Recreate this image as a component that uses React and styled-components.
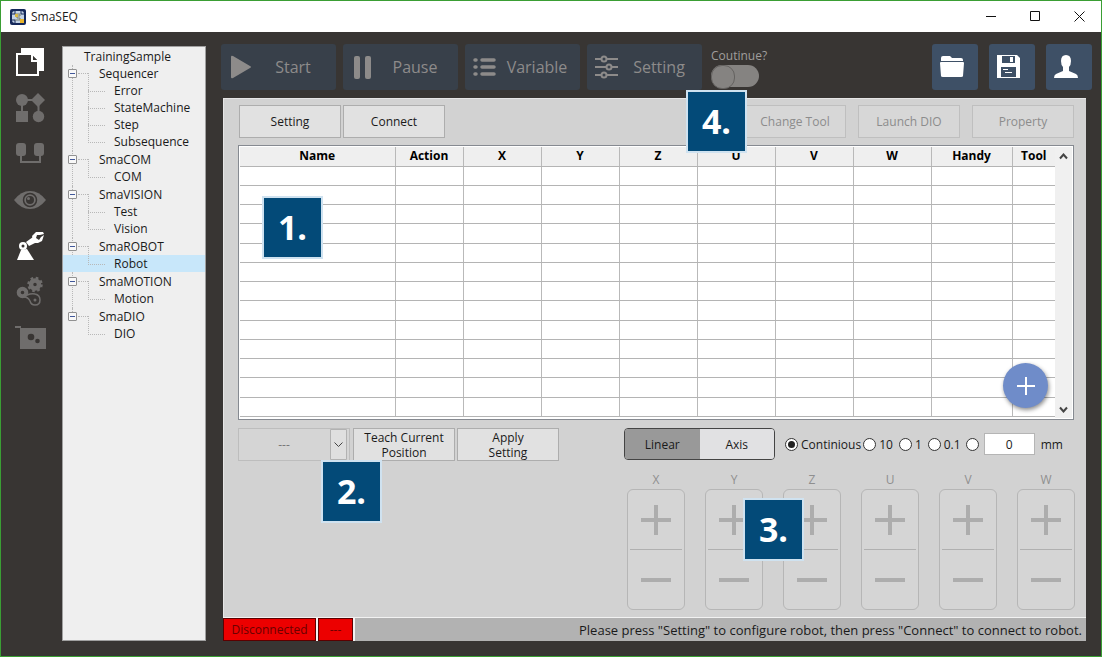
import React, { useState } from "react";
import styled, { createGlobalStyle } from "styled-components";

const Global = createGlobalStyle`
  * { box-sizing: border-box; }
  body { margin: 0; }
  body, button, input, select { font-family: "Open Sans", "Noto Sans", sans-serif; font-size: 12px; color: #1a1a1a; }
  button { padding: 0; cursor: pointer; }
  button:disabled, select:disabled { cursor: default; }
  ul { list-style: none; margin: 0; padding: 0; }
`;

const Window = styled.div`
  position: relative;
  display: flex;
  flex-direction: column;
  min-height: 100vh;
  min-width: 1040px;
  border: 1px solid #3a9e34;
  background: #383533;
`;

const TitleBar = styled.header`
  display: flex;
  align-items: center;
  height: 31px;
  padding-left: 9px;
  background: #fff;
`;

const Title = styled.h1`
  flex: 1;
  margin: 0 0 0 5px;
  font-size: 12px;
  font-weight: 400;
`;

const CaptionButton = styled.button`
  display: grid;
  place-items: center;
  width: 44px;
  height: 30px;
  border: 0;
  background: none;
`;

const Body = styled.div`
  display: flex;
  flex: 1;
  padding: 12px 9px 15px 0;
`;

const Rail = styled.nav`
  display: flex;
  flex-direction: column;
  align-items: center;
  gap: 14px;
  width: 61px;
  padding: 2px 4px 0 0;
`;

const RailButton = styled.button`
  width: 32px;
  height: 32px;
  border: 0;
  background: none;
  color: ${(p) => (p.$active ? "#fff" : "#6f6d6c")};
  svg { display: block; }
`;

const Tree = styled.aside`
  width: 144px;
  margin: 2px 15px 0 0;
  padding: 1px 0;
  border: 1px solid #a0a0a0;
  background: #efefef;
`;

const TreeRoot = styled.div`
  height: 17px;
  padding-left: 21px;
  line-height: 17px;
`;

const Group = styled.li`
  position: relative;
  padding-bottom: 1px;
  &::before {
    content: "";
    position: absolute;
    left: 9px;
    top: 0;
    height: ${(p) => (p.$last ? "8px" : "100%")};
    border-left: 1px dotted #b8b8b8;
  }
`;

const GroupRow = styled.div`
  display: flex;
  align-items: center;
  height: 17px;
  padding-left: 5px;
`;

const Toggle = styled.button`
  position: relative;
  display: grid;
  place-items: center;
  width: 9px;
  height: 9px;
  border: 1px solid #919191;
  border-radius: 1px;
  background: #f8f8f8;
  &::before { content: ""; width: 5px; height: 1px; background: #41589a; }
`;

const Stub = styled.span`
  width: 10px;
  margin: 0 11px 0 1px;
  border-top: 1px dotted #b8b8b8;
`;

const Leaf = styled.li`
  position: relative;
  height: 17px;
  padding-left: 51px;
  line-height: 18px;
  background: ${(p) => (p.$selected ? "#c8e7fa" : "none")};
  &::before {
    content: "";
    position: absolute;
    left: 25px;
    top: -9px;
    width: 16px;
    height: 18px;
    border-left: 1px dotted #b8b8b8;
    border-bottom: 1px dotted #b8b8b8;
  }
`;

const Main = styled.main`
  display: flex;
  flex: 1;
  flex-direction: column;
  min-width: 0;
`;

const Toolbar = styled.div`
  display: flex;
  gap: 7px;
  height: 46px;
  margin-bottom: 8px;
`;

const ToolButton = styled.button`
  display: flex;
  align-items: center;
  width: 115px;
  border: 0;
  border-radius: 3px;
  background: #38404a;
  color: #8d8b8a;
  font-size: 16px;
  svg { flex: none; margin-left: 8px; }
  span { flex: 1; padding-right: 3px; color: #8d8b8a; }
`;

const ContinueSwitch = styled.label`
  display: flex;
  flex: 1;
  flex-direction: column;
  align-items: flex-start;
  gap: 1px;
  padding: 3px 0 0 2px;
  color: #a09e9d;
  line-height: 17px;
`;

const SwitchInput = styled.input`
  appearance: none;
  display: flex;
  width: 48px;
  height: 22px;
  margin: 0;
  border-radius: 11px;
  background: #858381;
  &::before {
    content: "";
    width: 22px;
    height: 22px;
    border: 1px solid #646260;
    border-radius: 11px;
    background: #858381;
  }
`;

const ActionGroup = styled.div`
  display: flex;
  gap: 11px;
`;

const SquareButton = styled.button`
  display: grid;
  place-items: center;
  width: 46px;
  border: 0;
  border-radius: 3px;
  background: #3e5066;
  color: #fff;
  padding-right: 6px;
`;

const Panel = styled.section`
  display: flex;
  flex: 1;
  flex-direction: column;
  margin: 0 6px 0 2px;
  border-top: 1px solid #e6e6e6;
  border-left: 1px solid #e6e6e6;
  background: #d2d2d2;
`;

const PanelBody = styled.div`
  display: flex;
  flex: 1;
  flex-direction: column;
  padding: 6px 12px 7px 14px;
`;

const ButtonRow = styled.div`
  display: flex;
  gap: 2px;
  margin: 0 0 7px 1px;
`;

const RightButtons = styled.div`
  display: flex;
  gap: 12px;
  margin-left: auto;
`;

const PanelButton = styled.button`
  width: 102px;
  height: 33px;
  border: 1px solid #adadad;
  background: #e1e1e1;
  line-height: 15px;
  &:disabled { border-color: #bfbfbf; background: #d7d7d7; color: #8c8c8c; }
`;

const GridFrame = styled.div`
  position: relative;
  display: flex;
  height: 275px;
  padding: 1px;
  overflow: hidden;
  border: 1px solid #868a91;
  background: #fff;
`;

const Table = styled.table`
  flex: 1;
  height: 270px;
  table-layout: fixed;
  border-collapse: collapse;
  th, td { padding: 0; border-right: 1px solid #b9b9b9; border-bottom: 1px solid #b4b4b4; }
  th:last-child, td:last-child { border-right: 0; }
  th { height: 19px; background: #efefef; color: #000; font-weight: 700; line-height: 16px; }
`;

const TableWrap = styled.div`
  display: flex;
  flex: 1;
  align-items: flex-start;
`;

const ScrollBar = styled.div`
  display: flex;
  flex-direction: column;
  justify-content: space-between;
  width: 17px;
  background: #f0f0f0;
`;

const ScrollButton = styled.button`
  display: grid;
  place-items: center;
  height: 18px;
  border: 0;
  background: none;
`;

const AddButton = styled.button`
  position: absolute;
  right: 25px;
  bottom: 11px;
  display: grid;
  place-items: center;
  width: 45px;
  height: 45px;
  border: 0;
  border-radius: 50%;
  background: #6f8cc9;
  box-shadow: 1px 2px 4px rgba(0, 0, 0, 0.45);
`;

const ControlRow = styled.div`
  display: flex;
  align-items: flex-start;
  justify-content: space-between;
  margin: 8px 0 10px;
`;

const LeftControls = styled.div`
  display: flex;
  gap: 2px;
`;

const SelectBox = styled.div`
  display: grid;
  width: 112px;
  margin-right: 1px;
  select, svg { grid-area: 1 / 1; }
  svg { justify-self: end; align-self: center; margin-right: 2px; pointer-events: none; }
`;

const Select = styled.select`
  appearance: none;
  height: 33px;
  padding: 0 20px 0 0;
  border: 1px solid #bdbdbd;
  border-radius: 0;
  background: #d5d5d5;
  color: #777;
  text-align: center;
  text-align-last: center;
  opacity: 1;
`;

const MoveControls = styled.div`
  display: flex;
  width: 450px;
  align-items: center;
`;

const Segmented = styled.div`
  display: flex;
  width: 151px;
  height: 32px;
  margin-right: 10px;
  overflow: hidden;
  border: 1px solid #444;
  border-radius: 4px;
`;

const Segment = styled.button`
  flex: 1;
  border: 0;
  background: ${(p) => (p.$on ? "#999" : "#e1e1e3")};
`;

const Steps = styled.fieldset`
  display: flex;
  align-items: center;
  height: 24px;
  margin: 0;
  padding: 0;
  border: 0;
`;

const Step = styled.label`
  display: flex;
  align-items: center;
  gap: 3px;
  margin-right: ${(p) => p.$after}px;
`;

const Radio = styled.input`
  appearance: none;
  display: grid;
  place-items: center;
  width: 13px;
  height: 13px;
  margin: 0;
  border: 1px solid #333;
  border-radius: 50%;
  background: #fff;
  &:checked::before { content: ""; width: 7px; height: 7px; border-radius: 50%; background: #222; }
`;

const Distance = styled.input`
  width: 51px;
  height: 22px;
  margin: 0 6px 0 0;
  padding: 0;
  border: 1px solid #b5b5b5;
  background: #fff;
  text-align: center;
`;

const JogRow = styled.div`
  display: flex;
  justify-content: flex-end;
  gap: 20px;
  margin-right: -1px;
`;

const Jog = styled.div`
  width: 58px;
  color: #8f8f8f;
  line-height: 18px;
  text-align: center;
`;

const JogPad = styled.div`
  display: flex;
  flex-direction: column;
  height: 121px;
  padding: 0 2px;
  border: 1px solid #b6b6b6;
  border-radius: 6px;
  background: #d5d5d5;
`;

const JogButton = styled.button`
  display: grid;
  flex: 1;
  place-items: center;
  border: 0;
  background: none;
  & + & { border-top: 1px solid #b0b0b0; }
`;

const StatusBar = styled.footer`
  display: flex;
  gap: 2px;
  height: 24px;
  border-top: 1px solid #f2f2f2;
  margin-left: -1px;
  background: #f2f2f2;
`;

const StatusTag = styled.span`
  width: ${(p) => p.$width}px;
  border: 1px solid #5c0000;
  background: #ec0000;
  color: #6a0000;
  line-height: 21px;
  text-align: center;
`;

const StatusText = styled.p`
  flex: 1;
  margin: 0;
  padding-right: 4px;
  background: #b2b2b2;
  font-size: 13px;
  line-height: 24px;
  text-align: right;
`;

const Marker = styled.div`
  position: absolute;
  left: ${(p) => p.$x}px;
  top: ${(p) => p.$y}px;
  width: 61px;
  height: 63px;
  border: 2px solid #cfe2f0;
  background: #034a78;
  color: #fff;
  font-size: 34px;
  font-weight: 700;
  line-height: 59px;
  text-align: center;
`;

const railIcons = [
  ["Project", <><path d="M7 2h23v23H7z" fill="currentColor" /><path d="M3 8h14l7 7v14H3z" fill="#383533" /><path d="M2 7h16v2H4v19h19V15h2v15H2z" fill="currentColor" /><path d="M18 9l6 6h-6z" fill="#383533" /><path d="M17 8h2v6h5v2h-7z" fill="currentColor" /></>],
  ["Sequencer", <g fill="currentColor"><circle cx="8" cy="8" r="6" /><path d="M24 1l7 7-7 7-7-7z" /><path d="M2 19h12v11H2z" /><circle cx="24.500" cy="24.500" r="5.700" /><path d="M12 7h8v2h-8zM7 13h2v7H7zM23.500 13h2v7h-2z" /></g>],
  ["Communication", <g fill="currentColor"><rect x="2" y="5" width="10" height="13" rx="3" /><rect x="20" y="5" width="10" height="13" rx="3" /><path d="M7 16v8h19v-8" fill="none" stroke="currentColor" strokeWidth="2" /></g>],
  ["Vision", <><path d="M0 16Q7 7 16 7t16 9q-7 9-16 9T0 16z" fill="currentColor" /><circle cx="16" cy="16" r="6.500" fill="none" stroke="#383533" strokeWidth="1.500" /><circle cx="16" cy="16" r="4" fill="#383533" /><circle cx="14.500" cy="14.500" r="1.500" fill="currentColor" /></>],
  ["Robot", <g fill="currentColor"><path d="M7 20l6-1 7 11H3z" /><circle cx="9" cy="16" r="4" /><path d="M12 12l7-5 4 5-8 4z" /><path d="M18 6l4-4h7l1 2-4 1h-3l-1 3 3 2 2-3 3-2-2 6-4 2h-4z" /><circle cx="9" cy="16" r="1.500" fill="#383533" /></g>],
  ["Motion", <g><circle cx="21" cy="8.500" r="4" fill="none" stroke="currentColor" strokeWidth="4.500" /><circle cx="21" cy="8.500" r="6.500" fill="none" stroke="currentColor" strokeWidth="2.500" strokeDasharray="2.550 2.550" /><circle cx="8.500" cy="16.500" r="3.800" fill="none" stroke="currentColor" strokeWidth="4" /><path d="M13 19q5-2 8-1 5 1 5 6t-5 5q-4 0-5-4-2-4-6-4" fill="none" stroke="currentColor" strokeWidth="1.500" /><circle cx="21" cy="24" r="1.500" fill="currentColor" /></g>],
  ["Digital I/O", <><path d="M1 4h6v2h25v21H6V6H1z" fill="currentColor" /><circle cx="17" cy="15" r="3.300" fill="#383533" /><circle cx="23.500" cy="19" r="2.300" fill="#383533" /></>],
];

const groups = [
  ["Sequencer", ["Error", "StateMachine", "Step", "Subsequence"]],
  ["SmaCOM", ["COM"]],
  ["SmaVISION", ["Test", "Vision"]],
  ["SmaROBOT", ["Robot"]],
  ["SmaMOTION", ["Motion"]],
  ["SmaDIO", ["DIO"]],
];

const toolIcons = {
  Start: <path d="M2 2q0-2 2-1l17 10q2 1 0 2L4 23q-2 1-2-1z" fill="currentColor" />,
  Pause: <><rect x="3" y="1" width="6" height="23" rx="2" fill="currentColor" /><rect x="14" y="1" width="6" height="23" rx="2" fill="currentColor" /></>,
  Variable: <path d="M2 5h1M9 5h12M2 12h1M9 12h12M2 19h1M9 19h12" stroke="currentColor" strokeWidth="3.500" strokeLinecap="round" />,
  Setting: <g fill="#38404a" stroke="currentColor" strokeWidth="2"><path d="M0 4h23M0 12h23M0 20h23" /><circle cx="9" cy="4" r="2.500" /><circle cx="14" cy="12" r="2.500" /><circle cx="9" cy="20" r="2.500" /></g>,
};

const columns = [
  ["Name", 155], ["Action", 68], ["X", 78], ["Y", 78], ["Z", 78], ["U", 78],
  ["V", 78], ["W", 78], ["Handy", 81], ["Tool", 43],
];

const steps = [["Continious", 2], ["10", 6], ["1", 6], ["0.1", 5], ["", 5]];

const markers = [["1.", 261, 195], ["2.", 320, 459], ["3.", 742, 497], ["4.", 685, 89]];

export default function App() {
  const [mode, setMode] = useState("Linear");
  return (
    <>
      <Global />
      <Window>
        <TitleBar>
          <svg width="16" height="16" viewBox="0 0 16 16" aria-hidden="true">
            <rect width="16" height="16" rx="2" fill="#14285a" />
            <rect x="2" y="2" width="12" height="12" rx="3" fill="#c3d3e6" />
            <path d="M5 2v3H2M11 2v3h3M2 11h3v3" fill="none" stroke="#14285a" />
            <path d="M5 5h5v2H7v2h3v2H5" fill="none" stroke="#7b7f6a" />
            <rect x="5" y="5" width="3" height="3" fill="#d8b843" />
            <rect x="10" y="10" width="4" height="4" fill="#e9b42b" />
          </svg>
          <Title>SmaSEQ</Title>
          <CaptionButton aria-label="Minimize"><svg width="11" height="11"><path d="M0 5.500h10" stroke="#111" /></svg></CaptionButton>
          <CaptionButton aria-label="Maximize"><svg width="11" height="11"><path d="M.5.500h9v9h-9z" fill="none" stroke="#111" /></svg></CaptionButton>
          <CaptionButton aria-label="Close"><svg width="11" height="11"><path d="M.5.500l10 10M10.500.500l-10 10" stroke="#111" /></svg></CaptionButton>
        </TitleBar>
        <Body>
          <Rail>
            {railIcons.map(([name, art]) => (
              <RailButton key={name} aria-label={name} $active={name === "Project" || name === "Robot"}>
                <svg width="32" height="32" viewBox="0 0 32 32">{art}</svg>
              </RailButton>
            ))}
          </Rail>
          <Tree>
            <TreeRoot>TrainingSample</TreeRoot>
            <ul>
              {groups.map(([name, items], i) => (
                <Group key={name} $last={i === groups.length - 1}>
                  <GroupRow><Toggle aria-label={"Collapse " + name} /><Stub />{name}</GroupRow>
                  <ul>
                    {items.map((item) => <Leaf key={item} $selected={item === "Robot"}>{item}</Leaf>)}
                  </ul>
                </Group>
              ))}
            </ul>
          </Tree>
          <Main>
            <Toolbar>
              {Object.entries(toolIcons).map(([name, art]) => (
                <ToolButton key={name} disabled>
                  <svg width="24" height="25" viewBox="0 0 24 25">{art}</svg>
                  <span>{name}</span>
                </ToolButton>
              ))}
              <ContinueSwitch>Coutinue?<SwitchInput type="checkbox" role="switch" disabled /></ContinueSwitch>
              <ActionGroup>
                <SquareButton aria-label="Open">
                  <svg width="24" height="24"><path d="M1 3q0-2 2-2h7l2 2h9q2 0 2 2v1H1z" fill="#fff" /><path d="M0 8q0-1 1-1h22q1 0 1 1l-1 13q0 1-2 1H3q-2 0-2-1z" fill="#fff" /></svg>
                </SquareButton>
                <SquareButton aria-label="Save">
                  <svg width="24" height="24"><path d="M0 0h20l3 3v20H0z" fill="#fff" /><path d="M5 1h13v7H5zM4 12h15v10H4z" fill="#3e5066" /><path d="M13 2h3v5h-3zM6 14h5v1H6zM8 17h7v1H8z" fill="#fff" /></svg>
                </SquareButton>
                <SquareButton aria-label="User">
                  <svg width="24" height="24"><path d="M12 0q5 0 5 6 0 4-2 6v4l7 3q2 1 2 4H0q0-3 2-4l7-3v-4Q7 10 7 6q0-6 5-6z" fill="#fff" /></svg>
                </SquareButton>
              </ActionGroup>
            </Toolbar>
            <Panel>
              <PanelBody>
                <ButtonRow>
                  <PanelButton>Setting</PanelButton>
                  <PanelButton>Connect</PanelButton>
                  <RightButtons>
                    <PanelButton disabled>Change Tool</PanelButton>
                    <PanelButton disabled>Launch DIO</PanelButton>
                    <PanelButton disabled>Property</PanelButton>
                  </RightButtons>
                </ButtonRow>
                <GridFrame>
                  <TableWrap>
                    <Table>
                      <colgroup>{columns.map(([n, w]) => <col key={n} width={w} />)}</colgroup>
                      <thead><tr>{columns.map(([n]) => <th key={n} scope="col">{n}</th>)}</tr></thead>
                      <tbody>
                        {Array.from({ length: 13 }, (_, r) => (
                          <tr key={r}>{columns.map(([n]) => <td key={n} />)}</tr>
                        ))}
                      </tbody>
                    </Table>
                  </TableWrap>
                  <ScrollBar>
                    <ScrollButton aria-label="Scroll up"><svg width="9" height="7"><path d="M1 5.500l3.500-4 3.500 4" fill="none" stroke="#444" strokeWidth="2" /></svg></ScrollButton>
                    <ScrollButton aria-label="Scroll down"><svg width="9" height="7"><path d="M1 1.500l3.500 4 3.500-4" fill="none" stroke="#444" strokeWidth="2" /></svg></ScrollButton>
                  </ScrollBar>
                  <AddButton aria-label="Add"><svg width="18" height="18"><path d="M9 0v18M0 9h18" stroke="#fff" strokeWidth="2" /></svg></AddButton>
                </GridFrame>
                <ControlRow>
                  <LeftControls>
                    <SelectBox>
                      <Select aria-label="Position" disabled defaultValue="---"><option>---</option></Select>
                      <svg width="18" height="31"><path d="M.5.500h16v30H.5z" fill="#dfdfdf" stroke="#b2b2b2" /><path d="M4.500 13.500l4 4 4-4" fill="none" stroke="#444" /></svg>
                    </SelectBox>
                    <PanelButton>Teach Current<br />Position</PanelButton>
                    <PanelButton>Apply<br />Setting</PanelButton>
                  </LeftControls>
                  <MoveControls>
                    <Segmented>
                      {["Linear", "Axis"].map((m) => (
                        <Segment key={m} $on={mode === m} aria-pressed={mode === m} onClick={() => setMode(m)}>{m}</Segment>
                      ))}
                    </Segmented>
                    <Steps aria-label="Step size">
                      {steps.map(([label, after], i) => (
                        <Step key={i} $after={after}>
                          <Radio type="radio" name="step" defaultChecked={i === 0} aria-label={label || "Custom"} />{label}
                        </Step>
                      ))}
                    </Steps>
                    <Distance id="distance" defaultValue="0" />
                    <label htmlFor="distance">mm</label>
                  </MoveControls>
                </ControlRow>
                <JogRow>
                  {["X", "Y", "Z", "U", "V", "W"].map((a) => (
                    <Jog key={a}>
                      {a}
                      <JogPad>
                        <JogButton disabled aria-label={a + " plus"}><svg width="30" height="30"><path d="M15 0v30M0 15h30" stroke="#adadad" strokeWidth="4" /></svg></JogButton>
                        <JogButton disabled aria-label={a + " minus"}><svg width="30" height="4"><path d="M0 2h30" stroke="#adadad" strokeWidth="4" /></svg></JogButton>
                      </JogPad>
                    </Jog>
                  ))}
                </JogRow>
              </PanelBody>
              <StatusBar>
                <StatusTag $width={93}>Disconnected</StatusTag>
                <StatusTag $width={35}>---</StatusTag>
                <StatusText>Please press "Setting" to configure robot, then press "Connect" to connect to robot.</StatusText>
              </StatusBar>
            </Panel>
          </Main>
        </Body>
        {markers.map(([n, x, y]) => <Marker key={n} $x={x} $y={y}>{n}</Marker>)}
      </Window>
    </>
  );
}
